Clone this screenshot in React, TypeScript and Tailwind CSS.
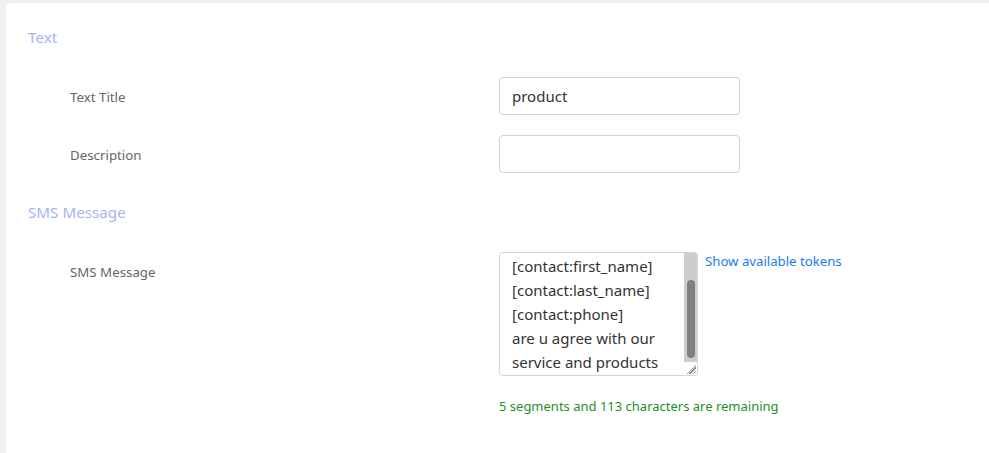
import React, { useEffect, useRef } from "react";

const font = { fontFamily: '"Noto Sans", "Open Sans", sans-serif' };

export default function App() {
  const ref = useRef<HTMLTextAreaElement>(null);
  useEffect(() => {
    if (ref.current) ref.current.scrollTop = ref.current.scrollHeight;
  }, []);
  const value =
    "Hello,\nDear customer\n[contact:first_name]\n[contact:last_name]\n[contact:phone]\nare u agree with our\nservice and products";
  return (
    <div className="w-full h-[453px] bg-[#edf1f4] pl-[6px] pt-[3px]" style={font}>
      <div className="h-full bg-white rounded-tl-[5px] pl-[22px] pt-[22px]">
        <div className="text-[15.2px] leading-[24px] text-[#a8b3f2]">Text</div>

        <div className="mt-[28px] flex items-center">
          <div className="ml-[42px] w-[429px] text-[13.3px] leading-[20px] text-[#666666] pt-[1px]">Text Title</div>
          <input
            defaultValue="product"
            className="w-[241px] h-[38px] border border-[#ced4da] rounded-[4px] px-[12px] text-[15px] text-[#333333] outline-none"
            style={font}
          />
        </div>

        <div className="mt-[20px] flex items-center">
          <div className="ml-[42px] w-[429px] text-[13.3px] leading-[20px] text-[#666666] pt-[1px]">Description</div>
          <input
            className="w-[241px] h-[38px] border border-[#ced4da] rounded-[4px] px-[12px] text-[15px] text-[#333333] outline-none"
            style={font}
          />
        </div>

        <div className="mt-[27px] text-[15.2px] leading-[24px] text-[#a8b3f2]">SMS Message</div>

        <div className="mt-[28px] flex items-start">
          <div className="ml-[42px] w-[429px] pt-[10px] text-[13.3px] leading-[20px] text-[#666666]">SMS Message</div>
          <div className="flex flex-col">
            <div className="flex items-start">
              <div className="relative w-[199px] h-[124px]">
                <textarea
                  ref={ref}
                  defaultValue={value}
                  className="block w-[199px] h-[124px] border border-[#ced4da] rounded-[4px] pl-[12px] pr-[16px] py-[1px] text-[15px] leading-[24px] text-[#333333] outline-none resize overflow-y-scroll"
                  style={font}
                />
                <div className="absolute right-[1px] top-[1px] w-[13px] h-[109px] bg-[#cdcdcd] pointer-events-none">
                  <div className="absolute left-[3px] top-[27px] w-[8px] h-[78px] rounded-full bg-[#808080]" />
                </div>
                <svg className="absolute right-[1px] bottom-[1px] pointer-events-none" width="12" height="12" viewBox="0 0 12 12">
                  <line x1="11" y1="2" x2="2" y2="11" stroke="#9a9a9a" strokeWidth="1" />
                  <line x1="11" y1="5" x2="5" y2="11" stroke="#9a9a9a" strokeWidth="1" />
                  <line x1="11" y1="8" x2="8" y2="11" stroke="#9a9a9a" strokeWidth="1" />
                </svg>
              </div>
              <a className="ml-[7px] -mt-[1px] text-[13.2px] leading-[20px] text-[#1a7bf0] cursor-pointer">
                Show available tokens
              </a>
            </div>
            <div className="mt-[20px] text-[13px] leading-[20px] text-[#1f8f1f]">
              5 segments and 113 characters are remaining
            </div>
          </div>
        </div>
      </div>
    </div>
  );
}
